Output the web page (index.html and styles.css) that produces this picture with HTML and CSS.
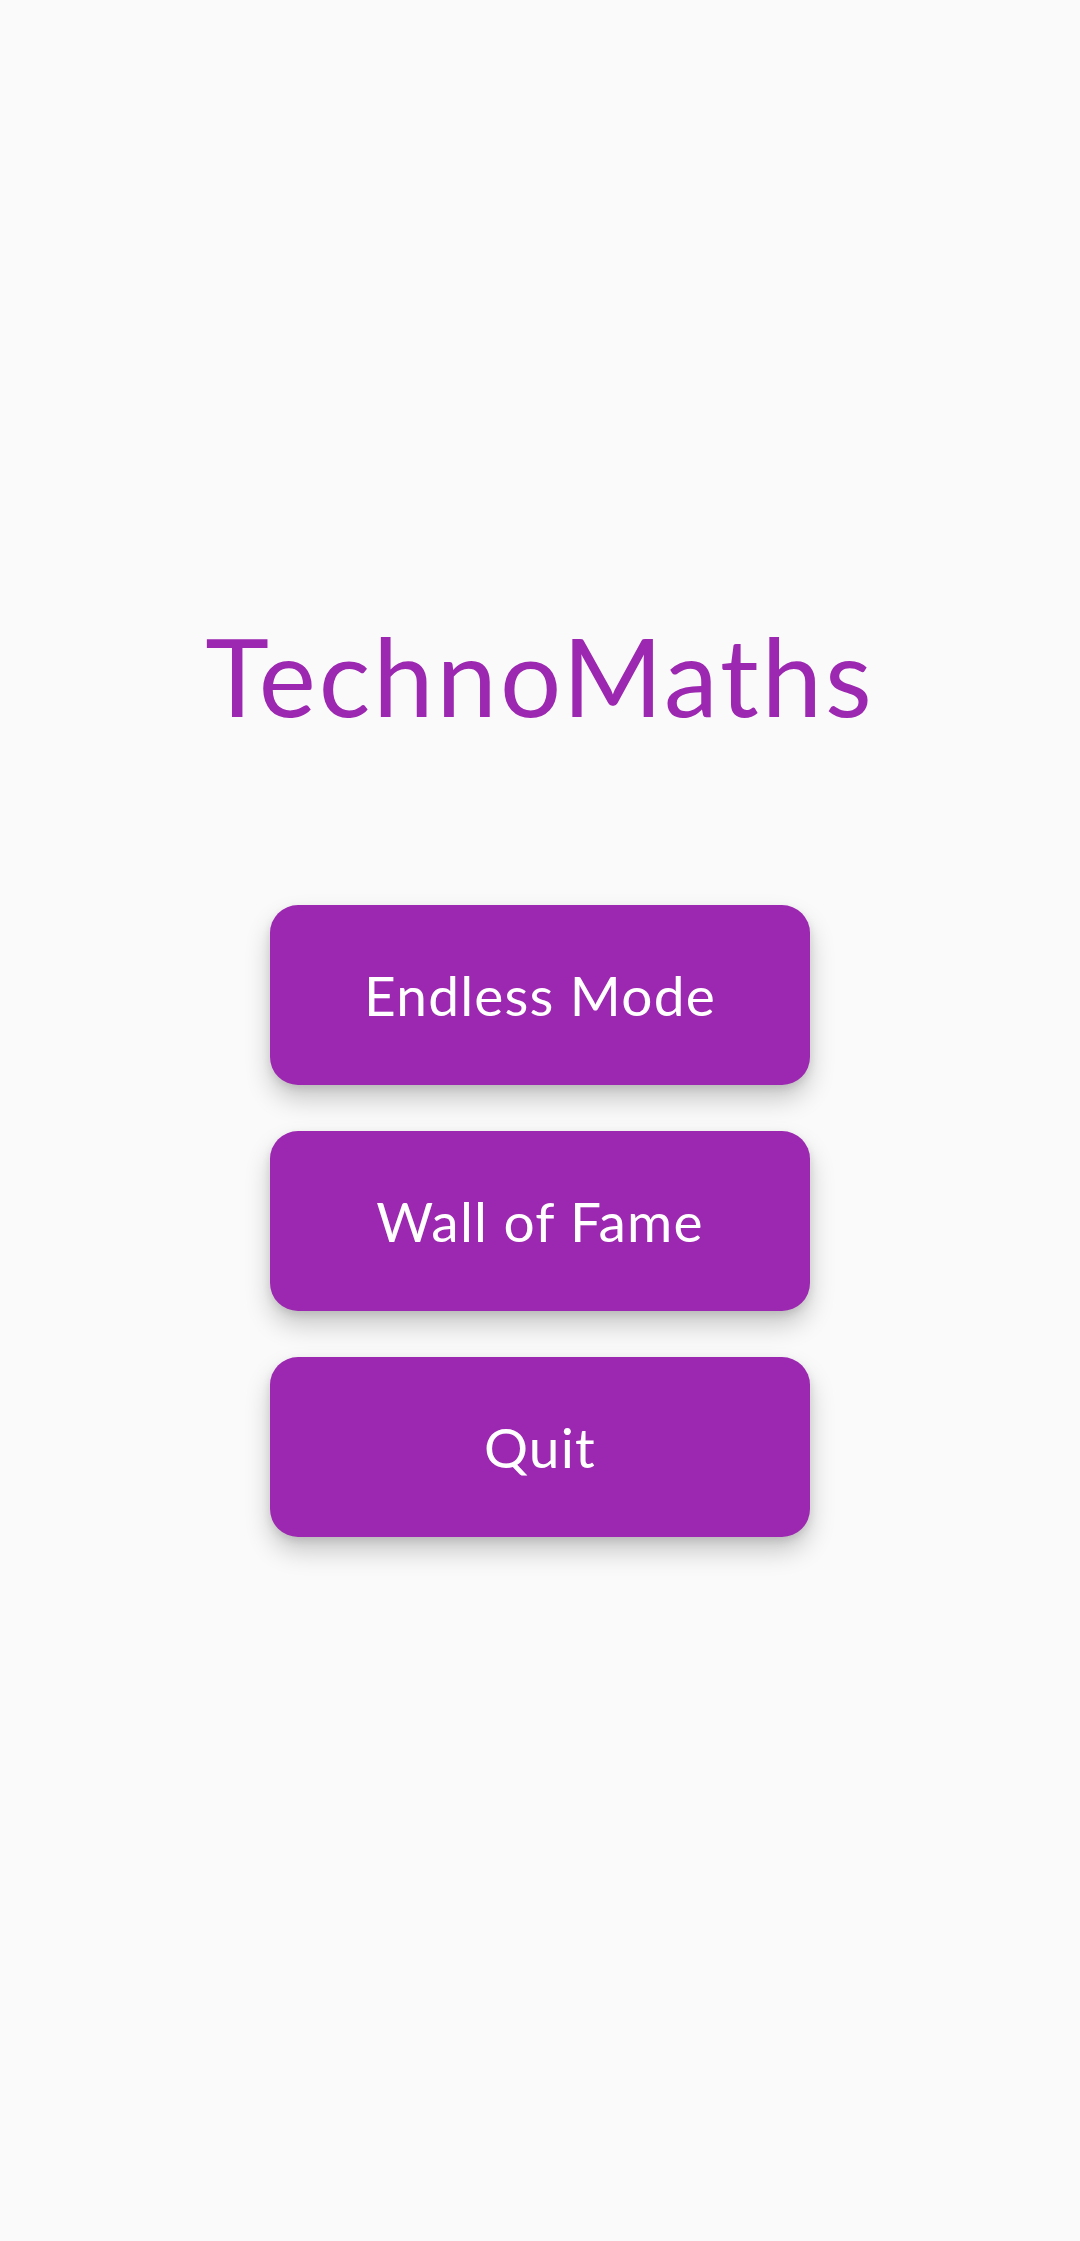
FILE: index.html
```html
<!DOCTYPE html>
<html lang="en">
<head>
<meta charset="utf-8">
<title>TechnoMaths</title>
<link rel="stylesheet" href="styles.css">
</head>
<body>
<main class="screen">
  <h1 class="title">TechnoMaths</h1>
  <nav class="menu">
    <button class="menu-btn">Endless Mode</button>
    <button class="menu-btn">Wall of Fame</button>
    <button class="menu-btn">Quit</button>
  </nav>
</main>
</body>
</html>
```

FILE: styles.css
```css
html, body {
  margin: 0;
  padding: 0;
  background: #fafafa;
}
body {
  width: 1080px;
  height: 2241px;
  font-family: "Lato", "Noto Sans", sans-serif;
}
.screen {
  display: flex;
  flex-direction: column;
  align-items: center;
  padding-top: 621px;
}
.title {
  margin: 0;
  font-size: 108px;
  line-height: 1;
  font-weight: 400;
  color: #9c27b0;
  letter-spacing: 3px;
}
.menu {
  margin-top: 176px;
  display: flex;
  flex-direction: column;
  gap: 46px;
}
.menu-btn {
  width: 540px;
  height: 180px;
  border: none;
  border-radius: 28px;
  background: #9c27b0;
  color: #ffffff;
  font-family: "Lato", "Noto Sans", sans-serif;
  font-size: 55px;
  font-weight: 400;
  letter-spacing: 1.2px;
  display: flex;
  align-items: center;
  justify-content: center;
  box-shadow: 0 14px 26px rgba(0, 0, 0, 0.2), 0 4px 8px rgba(0, 0, 0, 0.1);
  padding: 0;
}
```
